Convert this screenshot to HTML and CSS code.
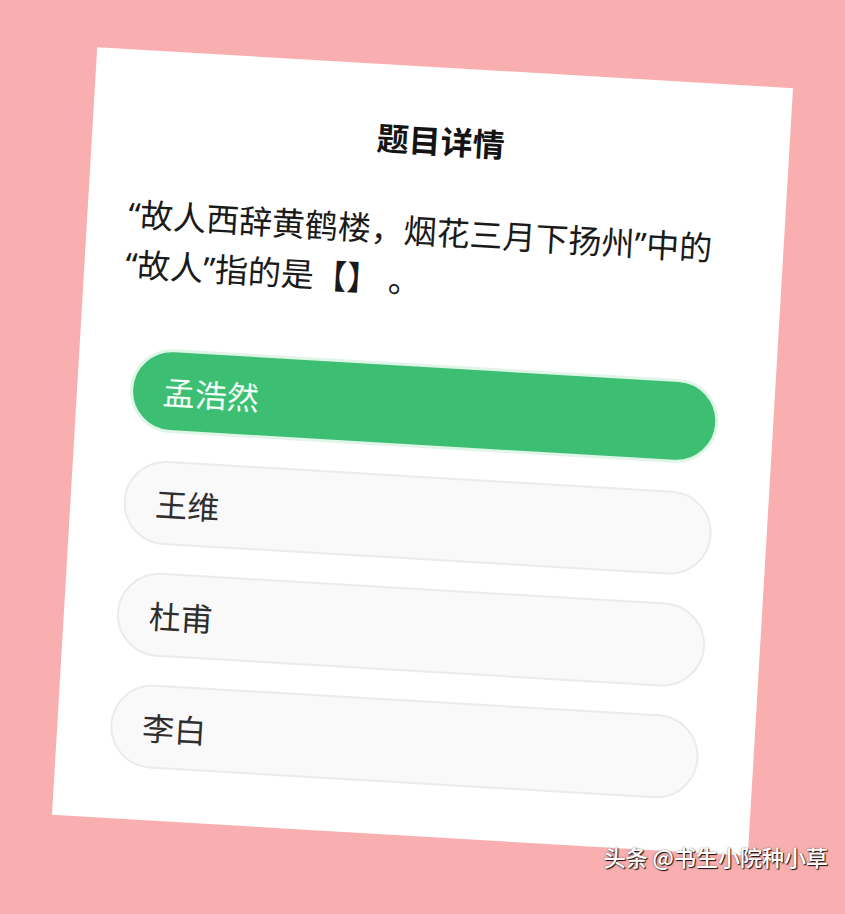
FILE: index.html
```html
<!DOCTYPE html>
<html lang="zh-CN">
<head>
<meta charset="utf-8">
<title>题目详情</title>
<link rel="stylesheet" href="styles.css">
</head>
<body>
<div class="stage">
  <div class="card">
    <h1 class="title">题目详情</h1>
    <p class="question">“故人西辞黄鹤楼，烟花三月下扬州”中的“故人”指的是【】 。</p>
    <ul class="options">
      <li class="option option-correct">孟浩然</li>
      <li class="option">王维</li>
      <li class="option">杜甫</li>
      <li class="option">李白</li>
    </ul>
  </div>
  <div class="watermark">头条 @书生小院种小草</div>
</div>
</body>
</html>
```
FILE: styles.css
```css
html, body {
  margin: 0;
  padding: 0;
}
body {
  background: #f9afaf;
  width: 845px;
  height: 914px;
  overflow: hidden;
  font-family: "Noto Sans CJK SC", "Noto Sans", sans-serif;
}
.stage {
  position: relative;
  width: 845px;
  height: 914px;
  padding: 67px 0 0 74px;
  box-sizing: border-box;
}
.card {
  width: 697px;
  height: 769px;
  box-sizing: border-box;
  background: #ffffff;
  transform: rotate(3.37deg);
  transform-origin: 50% 50%;
  padding: 50px 40px 0 36px;
}
.title {
  margin: 0;
  text-align: center;
  font-size: 32px;
  line-height: 44px;
  font-weight: 700;
  color: #141414;
  padding-right: 15px;
  padding-left: 19px;
}
.question {
  margin: 46px 0 0 0;
  padding-left: 5px;
  font-family: "Noto Sans", "Noto Sans CJK SC", sans-serif;
  font-size: 33px;
  line-height: 50px;
  color: #1a1a1a;
  font-weight: 400;
}
.options {
  list-style: none;
  margin: 57px 15px 0 17px;
  padding: 0;
  display: flex;
  flex-direction: column;
  gap: 28px;
}
.option {
  height: 84px;
  box-sizing: border-box;
  border-radius: 42px;
  background: #f9f9f9;
  border: 2px solid #ebebee;
  padding-left: 30px;
  display: flex;
  align-items: center;
  font-size: 32px;
  color: #2e2e2e;
}
.option-correct {
  background: #3dbf73;
  border: 3px solid #def5e7;
  color: #f4fff8;
}
.watermark {
  position: absolute;
  right: 17px;
  bottom: 42px;
  font-size: 22px;
  font-weight: 500;
  color: #ffffff;
  text-shadow: 1px 1px 1px rgba(0,0,0,0.9), 0 0 2px rgba(0,0,0,0.5);
  white-space: nowrap;
}
```
